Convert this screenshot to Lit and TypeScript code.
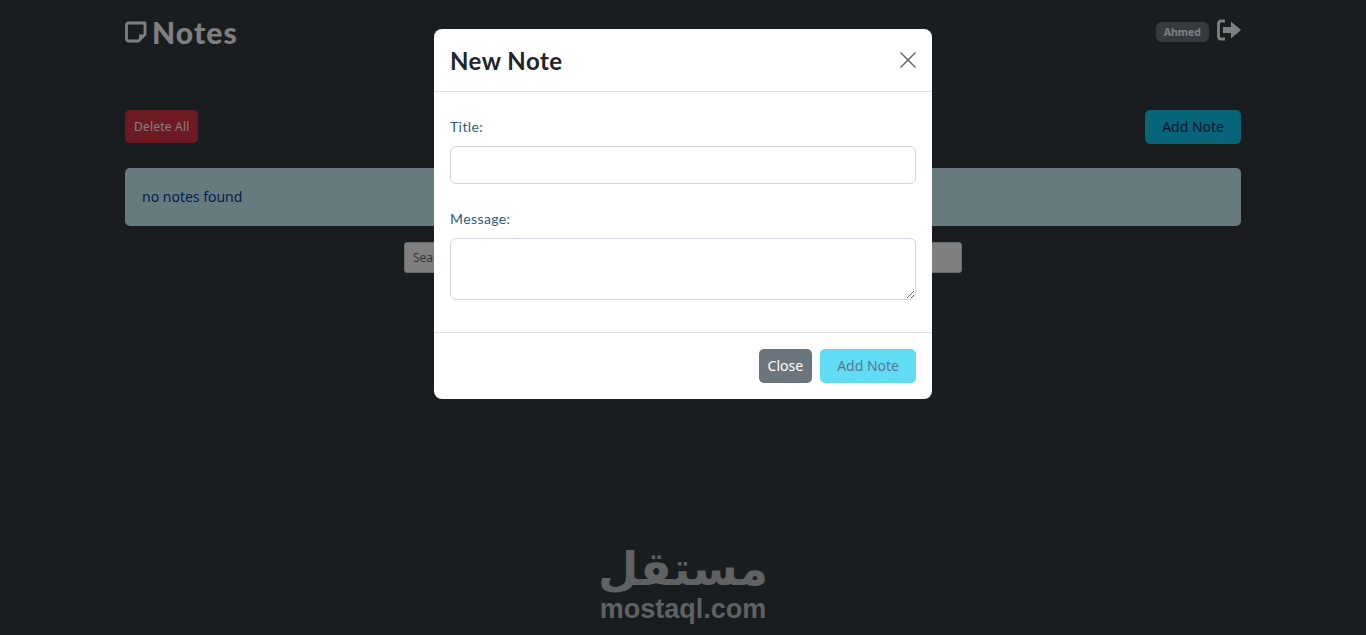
import { LitElement, html, css } from "lit";
import { customElement } from "lit/decorators.js";

@customElement("app-root")
export class AppRoot extends LitElement {
  static styles = css`
    :host { display: block; height: 635px; overflow: hidden; position: relative; background: #343a40; font-family: "Noto Sans", sans-serif; color: #212529; font-size: 14px; }
    * { box-sizing: border-box; }
    .page { padding: 0 125px; display: flex; flex-direction: column; }
    .nav { display: flex; justify-content: space-between; align-items: flex-start; height: 110px; padding-top: 17px; }
    .brand { display: flex; align-items: center; gap: 5px; color: #fff; font: 900 30px/30px Lato, sans-serif; letter-spacing: 1.1px; }
    .user { display: flex; align-items: flex-start; gap: 8px; margin-top: 2px; }
    .badge { background: #6c757d; color: #fff; font: 700 10.500px/20px "Noto Sans", sans-serif; border-radius: 6px; padding: 0 8px; margin-top: 3px; }
    .logout { display: block; }
    .tools { display: flex; justify-content: space-between; align-items: center; height: 34px; }
    .btn { border: none; border-radius: 5px; font: 14px/34px "Noto Sans", sans-serif; padding: 0 17px; height: 34px; }
    .danger { background: #dc3545; color: #fff; font-size: 12px; height: 33px; line-height: 33px; padding: 0 9px; letter-spacing: 0.2px; align-self: flex-start; }
    .info { background: #0dcaf0; color: #082a5e; }
    .alert { margin-top: 24px; background: #cff4fc; color: #084298; height: 58px; border-radius: 5px; padding: 0 17px 2px; display: flex; align-items: center; font-size: 14px; }
    .search { align-self: center; margin-top: 16px; width: 558px; height: 31px; border: 1px solid #ced4da; border-radius: 3px; background: #fff; padding: 0 8px; font: 12px "Noto Sans", sans-serif; }
    .backdrop { position: absolute; inset: 0; background: rgba(0, 0, 0, 0.5); display: flex; justify-content: center; align-items: flex-start; padding-top: 29px; }
    .modal { width: 498px; background: #fff; border-radius: 8px; display: flex; flex-direction: column; }
    .head { height: 63px; display: flex; align-items: center; justify-content: space-between; padding: 2px 16px 0; border-bottom: 1px solid #dee2e6; }
    h5 { margin: 0; font: 700 24px/30px Lato, sans-serif; letter-spacing: 0.5px; color: #212529; }
    .x { width: 16px; height: 16px; display: block; margin-bottom: 2px; }
    .body { padding: 23px 16px 32px; display: flex; flex-direction: column; }
    label { font: 400 14px/24px Lato, sans-serif; letter-spacing: 0.4px; color: #2a5d7c; margin-bottom: 7px; }
    .field { height: 38px; border: 1px solid #ced4da; border-radius: 6px; margin-bottom: 23px; background: #fff; display: block; width: 100%; }
    textarea.field { height: 62px; margin: 0; }
    .foot { height: 67px; border-top: 1px solid #dee2e6; display: flex; justify-content: flex-end; align-items: center; gap: 8px; padding: 0 16px; }
    .close { background: #6c757d; color: #fff; padding: 0 9px; font-size: 14px; }
    .add { background: #0dcaf0; opacity: 0.65; color: #082a5e; }
    .mark { position: absolute; left: 600px; top: 542px; width: 166px; display: flex; flex-direction: column; align-items: center; color: #5f6163; }
    .ar { font: 700 46.500px/54px "DejaVu Sans", sans-serif; }
    .lat { font: 700 27px/26px "Liberation Sans", sans-serif; }
  `;
  render() {
    return html`
      <div class="page">
        <div class="nav">
          <div class="brand">
            <svg width="22" height="22" viewBox="0 0 22 22" fill="none" stroke="currentColor" stroke-width="2.800" stroke-linejoin="round"><path d="M3.500 2h16.500v11.500L13.500 20H3.500A2 2 0 0 1 1.500 18V4A2 2 0 0 1 3.500 2z"/><path fill="currentColor" stroke="none" d="M14 20.500v-7h7z"/></svg>
            <span>Notes</span>
          </div>
          <div class="user">
            <span class="badge">Ahmed</span>
            <svg class="logout" width="24" height="22" viewBox="0 0 24 22"><path fill="none" stroke="#fff" stroke-width="2.800" d="M8 2H4a2.500 2.500 0 0 0-2.500 2.500v13A2.500 2.500 0 0 0 4 20h4"/><path fill="#fff" d="M6 8h8V2.500L24 11 14 19.500V14H6z"/></svg>
          </div>
        </div>
        <div class="tools">
          <button class="btn danger">Delete All</button>
          <button class="btn info">Add Note</button>
        </div>
        <div class="alert">no notes found</div>
        <input class="search" placeholder="Search..." />
      </div>
      <div class="backdrop">
        <div class="modal">
          <div class="head">
            <h5>New Note</h5>
            <svg class="x" viewBox="0 0 16 16" stroke="#666" stroke-width="1.500"><path d="M.5.500l15 15M15.500.500l-15 15"/></svg>
          </div>
          <div class="body">
            <label>Title:</label>
            <input class="field" />
            <label>Message:</label>
            <textarea class="field"></textarea>
          </div>
          <div class="foot">
            <button class="btn close">Close</button>
            <button class="btn add">Add Note</button>
          </div>
        </div>
      </div>
      <div class="mark">
        <span class="ar" lang="ar" dir="rtl">مستقل</span>
        <span class="lat">mostaql.com</span>
      </div>
    `;
  }
}
